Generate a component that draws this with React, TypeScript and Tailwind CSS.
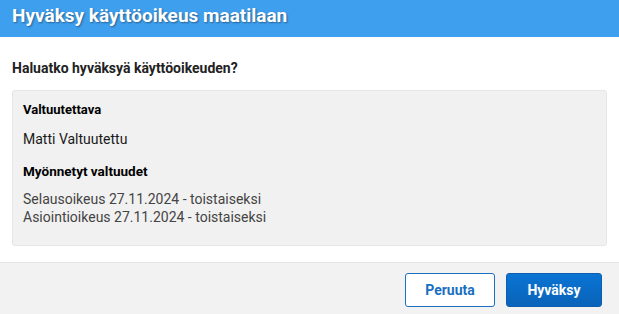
export default function App() {
  return (
    <div className="w-[619px] h-[314px] flex flex-col bg-white font-['Roboto',sans-serif] text-[#222]">
      <div className="h-[37px] shrink-0 bg-[#3e9fef] flex items-center px-[12px] pb-[4px]">
        <h1 className="text-white text-[19px] font-bold [text-shadow:1px_1px_2px_rgba(0,0,0,0.4)]">
          Hyväksy käyttöoikeus maatilaan
        </h1>
      </div>
      <div className="flex-1 px-[12px] pt-[22px]">
        <p className="text-[14px] font-bold text-[#222] leading-[18px]">Haluatko hyväksyä käyttöoikeuden?</p>
        <div className="mt-[13px] h-[156px] rounded-[3px] border border-[#e6e6e6] bg-[#f1f1f1] px-[10px] pt-[10px] leading-[17px]">
          <div className="text-[13px] font-bold text-black">Valtuutettava</div>
          <div className="mt-[13px] text-[14px] text-[#1a1a1a]">Matti Valtuutettu</div>
          <div className="mt-[15px] text-[13.5px] font-bold text-black">Myönnetyt valtuudet</div>
          <div className="mt-[10px] text-[14px] leading-[18px] text-[#444]">
            <div>Selausoikeus 27.11.2024 - toistaiseksi</div>
            <div>Asiointioikeus 27.11.2024 - toistaiseksi</div>
          </div>
        </div>
      </div>
      <div className="h-[52px] shrink-0 border-t border-[#e4e4e4] bg-[#f2f2f2] flex items-start justify-end gap-[11px] px-[17px] pt-[10px]">
        <button className="w-[90px] h-[34px] rounded-[3px] border border-[#1a6fc0] bg-white text-[#1a6fc0] text-[14px] font-bold">
          Peruuta
        </button>
        <button className="w-[96px] h-[34px] rounded-[3px] border border-[#0b5eb0] bg-gradient-to-b from-[#0a74d4] to-[#0963b8] text-white text-[14px] font-bold">
          Hyväksy
        </button>
      </div>
    </div>
  );
}
